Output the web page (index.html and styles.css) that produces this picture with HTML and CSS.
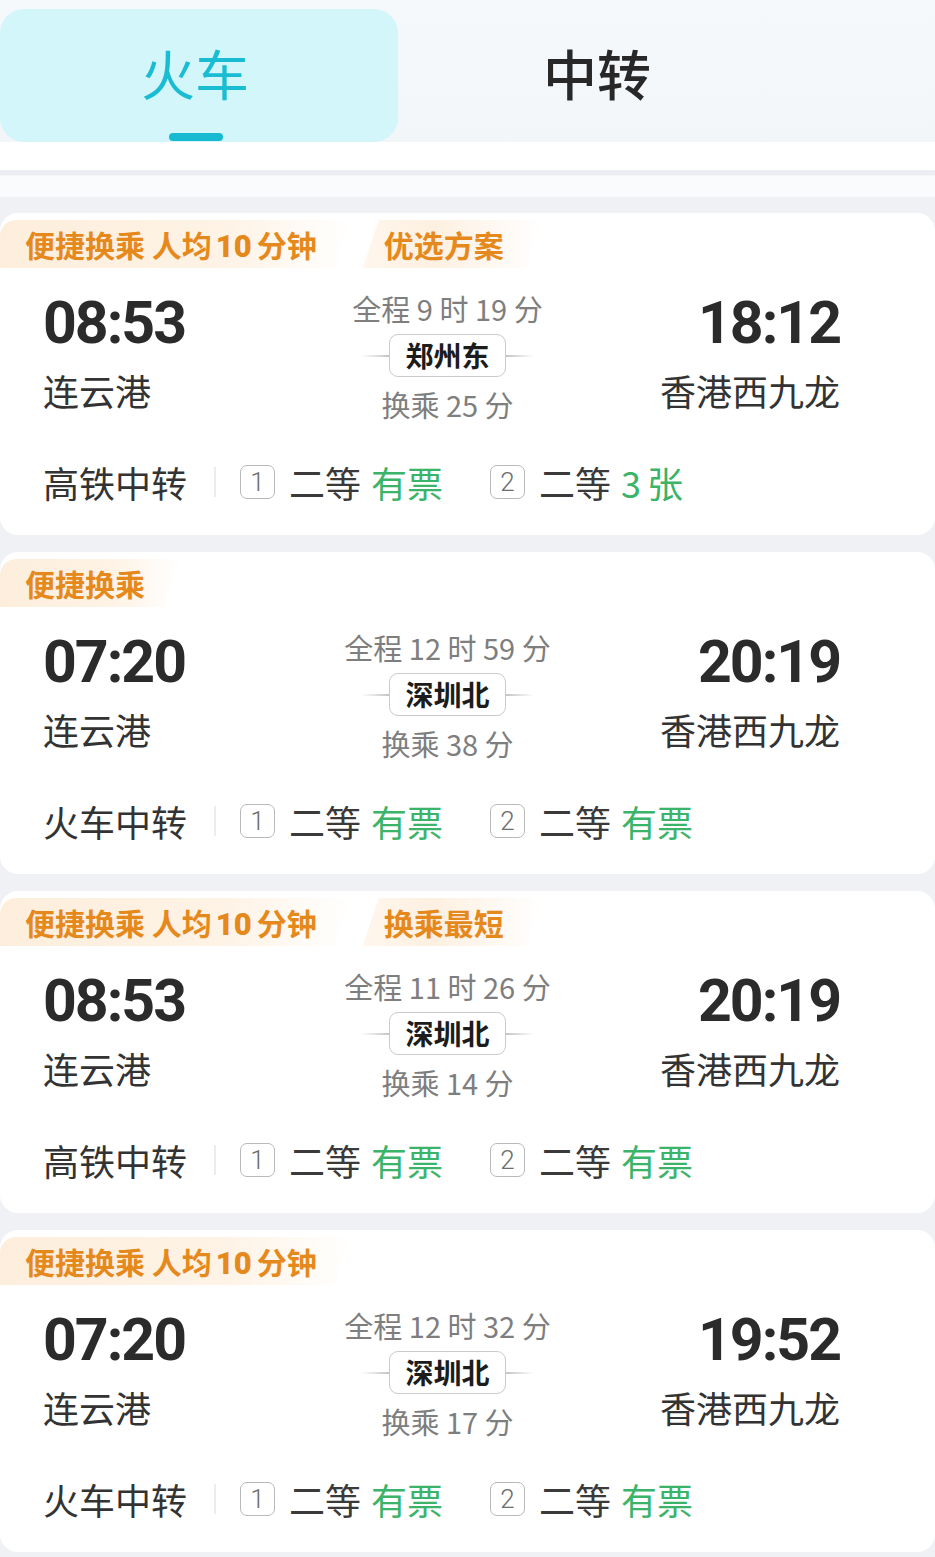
FILE: index.html
```html
<!DOCTYPE html>
<html>
	<head>
		<meta charset="utf-8">
		<title>火车中转</title>
		<link rel="stylesheet" href="styles.css">
	</head>
	<body>
		<div id="top">
			<div id="tabs">
				<div class="tab on">火车<span class="bar"></span></div>
				<div class="tab">中转</div>
			</div>
			<div class="shade"></div>
		</div>

		<div id="list">
			<div class="card">
				<div class="tags">
					<span class="tag">便捷换乘 人均<b>10</b>分钟</span>
					<span class="tag second">优选方案</span>
				</div>
				<div class="main">
					<div class="end">
						<div class="time">08:53</div>
						<div class="city">连云港</div>
					</div>
					<div class="mid">
						<div class="dur">全程 9 时 19 分</div>
						<div class="via"><span class="line"></span><span class="stn">郑州东</span><span class="line rt"></span></div>
						<div class="dur">换乘 25 分</div>
					</div>
					<div class="end right">
						<div class="time">18:12</div>
						<div class="city">香港西九龙</div>
					</div>
				</div>
				<div class="seats">
					<span class="kind">高铁中转</span>
					<span class="split"></span>
					<span class="seat"><span class="no">1</span>二等<em>有票</em></span>
					<span class="seat"><span class="no">2</span>二等<em><i>3</i>张</em></span>
				</div>
			</div>

			<div class="card">
				<div class="tags">
					<span class="tag">便捷换乘</span>
				</div>
				<div class="main">
					<div class="end">
						<div class="time">07:20</div>
						<div class="city">连云港</div>
					</div>
					<div class="mid">
						<div class="dur">全程 12 时 59 分</div>
						<div class="via"><span class="line"></span><span class="stn">深圳北</span><span class="line rt"></span></div>
						<div class="dur">换乘 38 分</div>
					</div>
					<div class="end right">
						<div class="time">20:19</div>
						<div class="city">香港西九龙</div>
					</div>
				</div>
				<div class="seats">
					<span class="kind">火车中转</span>
					<span class="split"></span>
					<span class="seat"><span class="no">1</span>二等<em>有票</em></span>
					<span class="seat"><span class="no">2</span>二等<em>有票</em></span>
				</div>
			</div>

			<div class="card">
				<div class="tags">
					<span class="tag">便捷换乘 人均<b>10</b>分钟</span>
					<span class="tag second">换乘最短</span>
				</div>
				<div class="main">
					<div class="end">
						<div class="time">08:53</div>
						<div class="city">连云港</div>
					</div>
					<div class="mid">
						<div class="dur">全程 11 时 26 分</div>
						<div class="via"><span class="line"></span><span class="stn">深圳北</span><span class="line rt"></span></div>
						<div class="dur">换乘 14 分</div>
					</div>
					<div class="end right">
						<div class="time">20:19</div>
						<div class="city">香港西九龙</div>
					</div>
				</div>
				<div class="seats">
					<span class="kind">高铁中转</span>
					<span class="split"></span>
					<span class="seat"><span class="no">1</span>二等<em>有票</em></span>
					<span class="seat"><span class="no">2</span>二等<em>有票</em></span>
				</div>
			</div>

			<div class="card">
				<div class="tags">
					<span class="tag">便捷换乘 人均<b>10</b>分钟</span>
				</div>
				<div class="main">
					<div class="end">
						<div class="time">07:20</div>
						<div class="city">连云港</div>
					</div>
					<div class="mid">
						<div class="dur">全程 12 时 32 分</div>
						<div class="via"><span class="line"></span><span class="stn">深圳北</span><span class="line rt"></span></div>
						<div class="dur">换乘 17 分</div>
					</div>
					<div class="end right">
						<div class="time">19:52</div>
						<div class="city">香港西九龙</div>
					</div>
				</div>
				<div class="seats">
					<span class="kind">火车中转</span>
					<span class="split"></span>
					<span class="seat"><span class="no">1</span>二等<em>有票</em></span>
					<span class="seat"><span class="no">2</span>二等<em>有票</em></span>
				</div>
			</div>
		</div>
	</body>
</html>
```

FILE: styles.css
```css
* {
	margin: 0;
	padding: 0;
	box-sizing: border-box;
}
body {
	width: 935px;
	background-color: #eff1f4;
	font-family: "Noto Sans CJK SC", "Noto Sans", sans-serif;
	color: #333;
}
#top {
	background-color: #fff;
}
#tabs {
	height: 142px;
	display: flex;
	align-items: flex-end;
	background: linear-gradient(180deg, #f6f9fc, #f3f6f9);
}
.tab {
	width: 398px;
	height: 133px;
	display: flex;
	align-items: center;
	justify-content: center;
	font-size: 54px;
	font-weight: 500;
	color: #282828;
	padding-bottom: 6px;
	position: relative;
}
.tab.on {
	background-color: #d3f6fa;
	border-radius: 24px;
	color: #19bcd3;
	font-weight: 400;
	padding-right: 8px;
}
.tab.on .bar {
	position: absolute;
	left: 169px;
	bottom: 1px;
	width: 54px;
	height: 8px;
	border-radius: 4px;
	background-color: #17bad1;
}
.shade {
	height: 55px;
	border-top: 28px solid #fff;
	background: linear-gradient(180deg, #eceef2 0, #eceef2 5px, #fafbfc 6px, #fafbfc);
}

#list {
	padding: 16px 0 5px;
	display: flex;
	flex-direction: column;
	gap: 17px;
}
.card {
	height: 322px;
	background-color: #fff;
	border-radius: 18px;
	overflow: hidden;
	padding: 7px 95px 0 0;
}
.tags {
	height: 48px;
	display: flex;
}
.tag {
	height: 48px;
	line-height: 48px;
	padding: 0 34px 0 25px;
	font-size: 30px;
	font-weight: 700;
	color: #e6891c;
	white-space: nowrap;
	background: linear-gradient(90deg, #fdeedc, #fef3e6 65%, rgba(255, 246, 236, 0));
	border-radius: 16px 0 0 0;
	clip-path: polygon(0 0, 100% 0, calc(100% - 16px) 100%, 0 100%);
}
.tag b {
	margin: 0 5px 0 4px;
	font-family: Roboto, "Liberation Sans", sans-serif;
	font-size: 31px;
}
.tag.second {
	margin-left: 12px;
	padding: 0 38px 0 21px;
	border-radius: 0;
	background: linear-gradient(90deg, #fff6ec, #fdf0e1 40%, rgba(253, 240, 225, 0));
	clip-path: polygon(16px 0, 100% 0, calc(100% - 16px) 100%, 0 100%);
}

.main {
	display: grid;
	grid-template-columns: 1fr auto 1fr;
	align-items: start;
	padding-left: 43px;
}
.time {
	margin-top: 20px;
	height: 70px;
	line-height: 70px;
	font-family: Roboto, "Liberation Sans", sans-serif;
	font-size: 59px;
	font-weight: 700;
	letter-spacing: -2px;
	color: #2b2b2b;
}
.city {
	margin-top: 8px;
	height: 48px;
	line-height: 48px;
	font-size: 36px;
	color: #333;
}
.end.right {
	text-align: right;
}
.mid {
	padding-left: 12px;
	display: flex;
	flex-direction: column;
	align-items: center;
}
.dur {
	margin-top: 22px;
	height: 36px;
	line-height: 36px;
	font-size: 29px;
	color: #7e7e7e;
	white-space: nowrap;
}
.via + .dur {
	margin-top: 9px;
}
.via {
	margin-top: 8px;
	display: flex;
	align-items: center;
}
.line {
	width: 28px;
	height: 2px;
	background: linear-gradient(90deg, rgba(200, 200, 200, 0), #c4c4c4);
}
.line.rt {
	background: linear-gradient(90deg, #c4c4c4, rgba(200, 200, 200, 0));
}
.stn {
	height: 43px;
	line-height: 41px;
	padding: 0 15px;
	border: 1px solid #cacaca;
	border-radius: 9px;
	font-size: 28px;
	font-weight: 700;
	color: #1c1c1c;
}

.seats {
	margin-top: 40px;
	height: 40px;
	padding-left: 43px;
	display: flex;
	align-items: center;
	font-size: 36px;
	color: #3a3a3a;
}
.kind {
	color: #333;
}
.split {
	width: 2px;
	height: 30px;
	background-color: #ececec;
	margin: 0 24px 0 27px;
}
.seat {
	display: flex;
	align-items: center;
	margin-right: 47px;
}
.no {
	width: 35px;
	height: 34px;
	border: 1.5px solid #b9b9b9;
	border-radius: 7px;
	display: flex;
	align-items: center;
	justify-content: center;
	font-family: Roboto, "Liberation Sans", sans-serif;
	font-size: 26px;
	font-weight: 300;
	color: #6e6e6e;
	margin-right: 14px;
}
.seat em {
	font-style: normal;
	color: #3bb46a;
	margin-left: 10px;
}
.seat em i {
	font-style: normal;
	margin-right: 6px;
}
```
